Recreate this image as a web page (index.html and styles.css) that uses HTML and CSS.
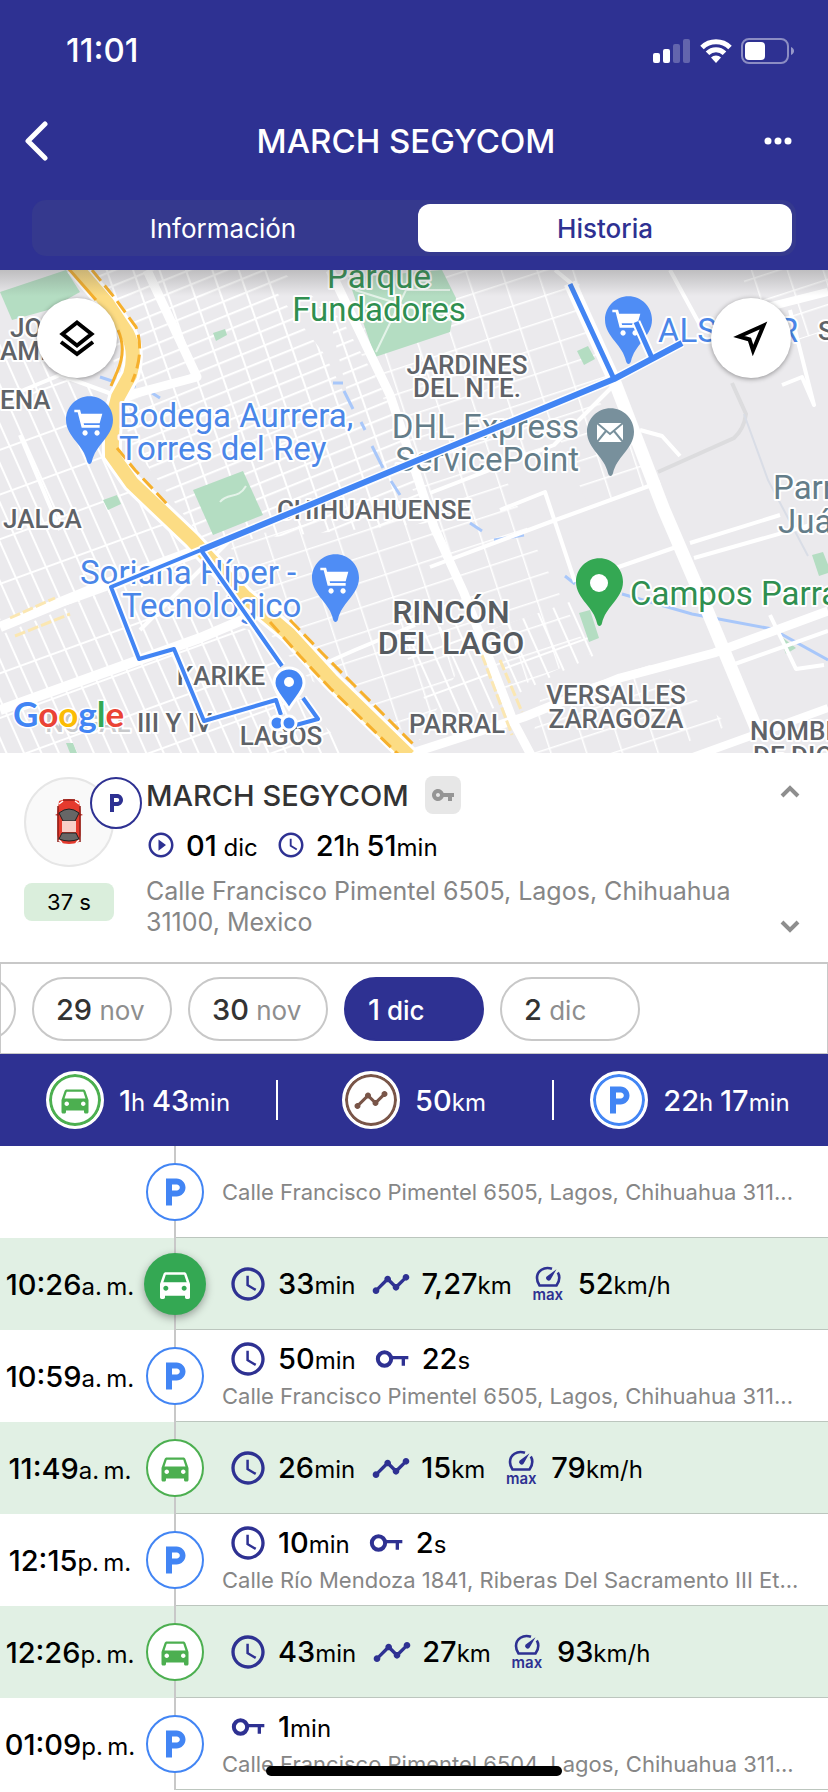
FILE: index.html
```html
<!DOCTYPE html>
<html lang="es">
<head>
<meta charset="utf-8">
<meta name="viewport" content="width=device-width, initial-scale=1">
<title>MARCH SEGYCOM</title>
<link rel="stylesheet" href="styles.css">
</head>
<body>
<svg class="defs" aria-hidden="true">
  <symbol id="car" viewBox="0 0 24 24"><path d="M18.92 6.01C18.72 5.42 18.16 5 17.5 5h-11c-.66 0-1.21.42-1.42 1.01L3 12v8c0 .55.45 1 1 1h1c.55 0 1-.45 1-1v-1h12v1c0 .55.45 1 1 1h1c.55 0 1-.45 1-1v-8l-2.08-5.99zM6.5 16c-.83 0-1.5-.67-1.5-1.5S5.67 13 6.5 13s1.5.67 1.5 1.5S7.33 16 6.5 16zm11 0c-.83 0-1.500-.67-1.500-1.500s.67-1.500 1.500-1.500 1.500.67 1.500 1.500-.67 1.500-1.500 1.500zM5 11l1.500-4.500h11L19 11H5z"/></symbol>
  <symbol id="parking" viewBox="0 0 24 24"><path d="M13 3H6v18h4v-6h3c3.310 0 6-2.690 6-6s-2.690-6-6-6zm.2 8H10V7h3.200c1.100 0 2 .9 2 2s-.9 2-2 2z"/></symbol>
  <symbol id="clock" viewBox="0 0 24 24"><path d="M11.990 2C6.470 2 2 6.480 2 12s4.470 10 9.990 10C17.520 22 22 17.520 22 12S17.520 2 11.990 2zM12 20c-4.420 0-8-3.580-8-8s3.580-8 8-8 8 3.580 8 8-3.580 8-8 8zm.5-13H11v6l5.250 3.150.75-1.230-4.500-2.670z"/></symbol>
  <symbol id="play" viewBox="0 0 24 24"><path d="M10 16.500l6-4.500-6-4.500v9zM12 2C6.480 2 2 6.480 2 12s4.480 10 10 10 10-4.480 10-10S17.520 2 12 2zm0 18c-4.410 0-8-3.590-8-8s3.590-8 8-8 8 3.590 8 8-3.590 8-8 8z"/></symbol>
  <symbol id="track" viewBox="0 0 24 24"><path d="M23 8c0 1.100-.9 2-2 2-.18 0-.35-.02-.51-.07l-3.560 3.550c.05.16.07.34.07.52 0 1.100-.9 2-2 2s-2-.9-2-2c0-.18.02-.36.07-.52l-2.550-2.550c-.16.05-.34.07-.52.07s-.36-.02-.52-.07l-4.550 4.560c.05.16.07.33.07.51 0 1.100-.9 2-2 2s-2-.9-2-2 .9-2 2-2c.18 0 .35.02.51.07l4.560-4.550C8.020 9.360 8 9.180 8 9c0-1.100.9-2 2-2s2 .9 2 2c0 .18-.02.36-.07.52l2.550 2.550c.16-.05.34-.07.52-.07s.36.02.52.07l3.550-3.560C19.020 8.350 19 8.180 19 8c0-1.100.9-2 2-2s2 .9 2 2z"/></symbol>
  <symbol id="ignition" viewBox="0 0 24 24"><g fill="none" stroke="currentColor"><circle cx="7.500" cy="12" r="4" stroke-width="2.400"/><path d="M11.500 11.200h10.300M18.800 11v5" stroke-width="2"/></g></symbol>
  <symbol id="key" viewBox="0 0 24 24"><path d="M12.650 10C11.830 7.670 9.610 6 7 6c-3.310 0-6 2.690-6 6s2.690 6 6 6c2.610 0 4.830-1.670 5.650-4H17v4h4v-4h2v-4H12.650zM7 14c-1.100 0-2-.9-2-2s.9-2 2-2 2 .9 2 2-.9 2-2 2z"/></symbol>
  <symbol id="gauge" viewBox="0 0 28 22"><path d="M18 2.800C10 0 3 5 3 12c0 2.800.7 5 2.500 7.500h17c1.800-2.500 2.800-5 2.800-7.800 0-1.900-.5-3.600-1.500-5.200" fill="none" stroke="currentColor" stroke-width="2.600" stroke-linejoin="round"/><path d="M22.500 3.200l-6 10.600a2.600 2.600 0 0 1-4.100-3.100z"/></symbol>
  <symbol id="cart" viewBox="0 0 24 24"><path d="M1 2v2h2.500l3 11.500H20v-2H8.300l-.3-1.300h12L22 5H6.100L5.300 2zM9 17.500a2 2 0 1 0 .1 0zM18 17.500a2 2 0 1 0 .1 0z"/></symbol>
  <symbol id="pin" viewBox="0 0 48 70"><path d="M24 0C11 0 0 10.500 0 24c0 9 5 15.500 10 22 5.500 7 9.500 12 11.500 20.500.8 3.500 4.200 3.500 5 0C28.500 58 32.500 53 38 46c5-6.500 10-13 10-22C48 10.500 37 0 24 0z"/></symbol>
</svg>

<header class="header">
  <div class="status">
    <span class="status-time">11:01</span>
    <svg class="status-icons" viewBox="0 0 144 28" role="img" aria-label="Señal, wifi y batería">
      <g fill="#fff"><rect x="1" y="17" width="7" height="10" rx="2"/><rect x="11" y="13" width="7" height="14" rx="2"/></g>
      <g fill="#fff" opacity=".25"><rect x="21" y="8" width="7" height="19" rx="2"/><rect x="31" y="3" width="7" height="24" rx="2"/></g>
      <g fill="none" stroke="#fff" stroke-width="5"><path d="M50 11.500a20 20 0 0 1 28 0"/><path d="M55.500 17.300a12 12 0 0 1 17 0"/></g>
      <path d="M59 21.500a7 7 0 0 1 10 0l-5 5.500z" fill="#fff"/>
      <rect x="90" y="3" width="46" height="24" rx="7" fill="none" stroke="#fff" stroke-opacity=".45" stroke-width="2"/>
      <rect x="93" y="6" width="20" height="18" rx="4" fill="#fff"/>
      <path d="M139 11c4 1.500 4 6.500 0 8z" fill="#fff" opacity=".5"/>
    </svg>
  </div>
  <div class="titlebar">
    <button class="icon-button back" aria-label="Atrás"><svg viewBox="0 0 24 40"><path d="M21 3L4 20l17 17" fill="none" stroke="#fff" stroke-width="5" stroke-linecap="round" stroke-linejoin="round"/></svg></button>
    <h1 class="title">MARCH SEGYCOM</h1>
    <button class="icon-button more" aria-label="Más"><svg viewBox="0 0 28 8"><circle cx="4" cy="4" r="3.500"/><circle cx="14" cy="4" r="3.500"/><circle cx="24" cy="4" r="3.500"/></svg></button>
  </div>
  <nav class="segments">
    <button class="segment">Información</button>
    <button class="segment active">Historia</button>
  </nav>
</header>

<section class="map" aria-label="Mapa">
  <svg class="map-canvas" viewBox="0 0 828 483" preserveAspectRatio="xMidYMid slice">
    <defs>
      <pattern id="blocksWide" width="25" height="14" patternUnits="userSpaceOnUse" patternTransform="rotate(-22) skewX(-3)"><path d="M0 0h25M0 0v14" fill="none" stroke="#fff" stroke-width="4"/></pattern>
      <pattern id="blocksTall" width="16" height="42" patternUnits="userSpaceOnUse" patternTransform="rotate(-20) skewX(4)"><path d="M0 0h16M0 0v42" fill="none" stroke="#fff" stroke-width="4"/></pattern>
      <pattern id="blocksOpen" width="34" height="24" patternUnits="userSpaceOnUse" patternTransform="rotate(-18)"><path d="M0 0h34M0 0v24" fill="none" stroke="#fff" stroke-width="3"/></pattern>
      <linearGradient id="topShade" x1="0" y1="0" x2="0" y2="1"><stop offset="0" stop-color="#555" stop-opacity=".3"/><stop offset="1" stop-color="#555" stop-opacity="0"/></linearGradient>
    </defs>
    <rect width="828" height="483" fill="#ebeaed"/>
    <path d="M95 0h185l62 50 48 83 40 120-225 20-75-100-10-50z" fill="url(#blocksWide)"/>
    <path d="M0 70l110 55 10 80 90 85-75 30L0 350z" fill="url(#blocksTall)"/>
    <path d="M0 365l110-45 140 40 60 80 40 43H0z" fill="url(#blocksTall)"/>
    <path d="M230 270l190-40 60 130-60 110-110-60-70-80z" fill="url(#blocksOpen)"/>
    <path d="M400 0h175l35 110-195 82-60-120z" fill="url(#blocksOpen)"/>
    <path d="M400 190l190-70 70 90-130 55 60 120-90 40z" fill="url(#blocksOpen)"/>
    <path d="M490 360l85-30 20 55-80 40zM400 370l75-25 30 90-70 20z" fill="url(#blocksTall)"/>
    <path d="M540 430l110-35 80 60-70 28H530z" fill="url(#blocksOpen)"/>
    <path d="M740 0h88v60l-60 20z" fill="url(#blocksOpen)"/>
    <path d="M275 20l20-10 35 40 20 85-25-50zM500 195l60-25 30 70-60 25zM660 120l70-10 10 60-60 30z" fill="#ebeaed"/>
    <g fill="#b4ddc2">
      <path d="M0 22L66 0l14 22-32 18-36 10z"/><path d="M348 8l94-8 14 28-6 34-75 25z"/><path d="M193 220l50-19 20 44-50 20z"/><path d="M213 63l12-4 2 6-11 6z"/><path d="M577 81l11-5 7 13-11 6zM103 230l14-5 4 9-13 6z"/>
      <path d="M579 343l11-3 9 28-10 4zM812 285l11-3 8 20-12 4zM778 364l18 14-10 6z"/><path d="M66 473h7l4 10h-7z"/>
    </g>
    <g fill="none" stroke="#e4f3e9" stroke-width="2"><path d="M355 20l95 30M376 82l30-62 44 0M220 232c8-10 18-2 26-16"/></g>
    <g fill="none" stroke="#a8c7fa" stroke-width="3"><path d="M470 253l12 8M494 270l30-5M565 306l10 8M622 324l70 20 80 15 56 31M333 113l10 0M344 121l9 18M361 152l4 8M372 176l11 22M391 211l9 14M100 107l12 4M128 116h8M152 123l8 5"/></g>
    <path d="M732 113l14 31q-2 15-12 24l-76 34" fill="none" stroke="#dcdcde" stroke-width="4"/>
    <path d="M744 144l24 66 40 76" fill="none" stroke="#d9dde6" stroke-width="2"/>
    <g fill="none" stroke="#fff" stroke-linejoin="round">
      <path d="M147 0l50 107L118 128M330 0l60 125 44 132 30 66 50 130 18 34" stroke-width="9"/>
      <path d="M570 13l44 97 50 130 43 100 50 120" stroke-width="13"/>
      <path d="M0 357l110-45 92-34M0 440l200-72 80-34" stroke-width="10"/>
      <path d="M400 487l124-40 96-39 94-25 114-42" stroke-width="9"/>
      <path d="M690 488l138-50M764 38l64-16" stroke-width="8"/>
      <path d="M614 115l-60 60-124 48M660 212l-110 40-120 45M690 273l90-28M694 288l134-38M604 302l78-27M670 0l30 55M790 40l24 95-12-28-20 8M555 0l16 13M640 160l22 6 18 20M732 395l96-34M770 345l26 54 28-4M0 130l60-25 60 22M20 165l40 95M230 270l-90 90M310 400l45-20 60-25M500 240l45-18 30 90" stroke-width="4"/>
    </g>
    <g fill="none" stroke="#fbe7b2" stroke-width="3" stroke-dasharray="11 3"><path d="M10 348l45-20M15 366l55-22M482 385l30 80M500 390l22 52"/></g>
    <path d="M75-4l32 37 20 30q10 19 3 42l-12 22q-7 22-6 58l20 28 60 57 52 56 45 38 42 46 78 76" fill="none" stroke="#fff" stroke-width="20"/>
    <path d="M75-4l32 37 20 30q10 19 3 42l-12 22q-7 22-6 58l20 28 60 57 52 56 45 38 42 46 78 76" fill="none" stroke="#fcdc84" stroke-width="14"/>
    <g fill="none" stroke="#f6b02c" stroke-width="3"><path d="M68-2l28 32M118 60q9 20-1 42l-6 14"/><path d="M92 0l22 27 22 30q9 25-4 55M117 178l18 22 32 34M270 352l30 34 30 32 70 68M290 350l35 36 90 90" stroke-dasharray="14 6"/></g>

    <g class="place place-blue">
      <use href="#pin" x="66" y="126" width="47" height="69"/><use href="#pin" x="605" y="26" width="47" height="69"/><use href="#pin" x="312" y="284" width="47" height="69"/>
    </g>
    <g fill="#fff"><use href="#cart" x="73" y="137" width="32" height="32"/><use href="#cart" x="611" y="37" width="32" height="32"/><use href="#cart" x="319" y="295" width="32" height="32"/></g>
    <use href="#pin" x="587" y="138" width="47" height="69" fill="#78909c"/>
    <g fill="#fff" stroke="#78909c" stroke-width="2"><rect x="596" y="152" width="28" height="21"/><path d="M597 153l13 11 13-11M597 172l9-11M623 172l-9-11" fill="none"/></g>
    <use href="#pin" x="576" y="288" width="47" height="69" fill="#34a853"/><circle cx="599" cy="313" r="9" fill="#fff"/>

    <g class="label label-blue"><text x="119" y="157">Bodega Aurrera,</text><text x="119" y="190">Torres del Rey</text><text x="658" y="72">ALSUPER</text><text x="80" y="314">Soriana Híper -</text><text x="122" y="347">Tecnológico</text></g>
    <g class="label label-green"><text class="middle" x="379" y="18">Parque</text><text class="middle" x="379" y="51">Fundadores</text><text x="630" y="335">Campos Parral</text></g>
    <g class="label label-slate"><text class="end" x="579" y="168">DHL Express</text><text class="end" x="579" y="201">ServicePoint</text><text x="773" y="229">Parral</text><text x="778" y="263">Juárez</text></g>
    <g class="label label-area">
      <text x="10" y="67">JO</text><text x="0" y="90">AMI</text><text x="0" y="139">ENA</text><text x="3" y="258">JALCA</text>
      <text class="middle" x="467" y="104">JARDINES</text><text class="middle" x="467" y="127">DEL NTE.</text>
      <text class="middle" x="374" y="249">CHIHUAHUENSE</text><text class="middle" x="221" y="415">KARIKE</text><text class="middle" x="281" y="475">LAGOS</text>
      <text class="end" x="212" y="462"><tspan fill-opacity=".35">NOGAL</tspan> III Y IV</text><text class="middle" x="457" y="463">PARRAL</text>
      <text class="middle" x="616" y="434">VERSALLES</text><text class="middle" x="616" y="458">ZARAGOZA</text><text x="750" y="470">NOMBRE</text><text x="753" y="495">DE DIOS</text><text x="818" y="70">S</text>
    </g>
    <g class="label label-town"><text class="middle" x="451" y="353">RINCÓN</text><text class="middle" x="451" y="384">DEL LAGO</text></g>

    <g fill="none" stroke-linejoin="round">
      <g stroke="#fff"><path d="M201 280l413-171 68-36M570 14l44 95M636 52l16 36" stroke-width="9"/><path d="M282 396l-81-116-90 37 28 72 35-10 30 72 72-21 5 15M303 428l15 21-22 6" stroke-width="8"/></g>
      <g stroke="#4285f4"><path d="M201 280l413-171 68-36" stroke-width="6"/><path d="M570 14l44 95M636 52l16 36" stroke-width="5"/><path d="M282 396l-81-116-90 37 28 72 35-10 30 72 72-21 5 15M303 428l15 21-22 6" stroke-width="4"/></g>
    </g>
    <g fill="#4285f4" stroke="#fff" stroke-width="3"><circle cx="277" cy="453" r="7"/><circle cx="289" cy="453" r="7"/><path d="M289 398c-8 0-15 6-15 15 0 8 7 13 15 26 8-13 15-18 15-26 0-9-7-15-15-15z"/></g>
    <circle cx="289" cy="412" r="5" fill="#fff"/>
    <text class="google" x="13" y="457"><tspan fill="#4285f4">G</tspan><tspan fill="#ea4335">o</tspan><tspan fill="#fbbc05">o</tspan><tspan fill="#4285f4">g</tspan><tspan fill="#34a853">l</tspan><tspan fill="#ea4335">e</tspan></text>
    <rect width="828" height="26" fill="url(#topShade)"/>
  </svg>
  <button class="map-button layers" aria-label="Capas"><svg viewBox="0 0 40 40"><path d="M20 4.500L34.500 16 20 27.500 5.500 16z"/><path d="M4 24l16 12 16-12"/></svg></button>
  <button class="map-button locate" aria-label="Ubicar"><svg viewBox="0 0 40 40"><path d="M32.500 7.500L8 18.500l10.500 3 3.500 11z"/></svg></button>
</section>

<section class="vehicle">
  <div class="vehicle-side">
    <div class="avatar">
      <svg class="avatar-car" viewBox="0 0 28 48"><path d="M4 3q10-4 20 0l1.500 10v24L24 44q-10 4-20 0l-1.500-7V13z" fill="#e53a2d"/><path d="M0 17l4-2v3zM28 17l-4-2v3z" fill="#b3261e"/><path d="M8 2h12M3 8v36M25 8v36" stroke="#8d1c16" stroke-width="1.500"/><path d="M4 15q10-8 20 0l-4 8H8z" fill="#666" stroke="#222"/><path d="M7 23h14v11H7z" fill="#f8cfc8"/><path d="M7 35h14l3 6q-10 4-20 0z" fill="#666" stroke="#222"/><path d="M4 6l4-3M24 6l-4-3M4 42l3 3M24 42l-3 3" stroke="#fff" stroke-width="1.500"/></svg>
      <span class="avatar-badge"><svg viewBox="0 0 24 24"><use href="#parking"/></svg></span>
    </div>
    <span class="age">37 s</span>
  </div>
  <div class="vehicle-main">
    <div class="vehicle-name"><h2>MARCH SEGYCOM</h2><span class="key-badge"><svg viewBox="0 0 24 24"><use href="#key"/></svg></span></div>
    <div class="vehicle-stats">
      <svg class="small-icon" viewBox="0 0 24 24"><use href="#play"/></svg><span class="value">01<small> dic</small></span>
      <svg class="small-icon" viewBox="0 0 24 24"><use href="#clock"/></svg><span class="value">21<small>h </small>51<small>min</small></span>
    </div>
    <p class="vehicle-address">Calle Francisco Pimentel 6505, Lagos, Chihuahua 31100, Mexico</p>
  </div>
  <div class="vehicle-nav">
    <button class="icon-button" aria-label="Anterior"><svg viewBox="0 0 20 14"><path d="M2 12l8-8 8 8" fill="none" stroke="#8e8e8e" stroke-width="4"/></svg></button>
    <button class="icon-button" aria-label="Siguiente"><svg viewBox="0 0 20 14"><path d="M2 2l8 8 8-8" fill="none" stroke="#8e8e8e" stroke-width="4"/></svg></button>
  </div>
</section>

<nav class="dates" aria-label="Fechas">
  <button class="date" aria-label="28 nov"></button>
  <button class="date"><b>29</b> nov</button>
  <button class="date"><b>30</b> nov</button>
  <button class="date current"><b>1</b> dic</button>
  <button class="date"><b>2</b> dic</button>
</nav>

<section class="summary">
  <div class="total"><span class="ring green"><svg viewBox="0 0 24 24"><use href="#car"/></svg></span><span class="value">1<small>h </small>43<small>min</small></span></div>
  <div class="total"><span class="ring brown"><svg viewBox="0 0 24 24"><use href="#track"/></svg></span><span class="value">50<small>km</small></span></div>
  <div class="total"><span class="ring blue"><svg viewBox="0 0 24 24"><use href="#parking"/></svg></span><span class="value">22<small>h </small>17<small>min</small></span></div>
</section>

<ol class="timeline">
  <li class="event">
    <span class="time"></span>
    <span class="marker blue"><svg viewBox="0 0 24 24"><use href="#parking"/></svg></span>
    <div class="details"><p class="address">Calle Francisco Pimentel 6505, Lagos, Chihuahua 311...</p></div>
  </li>
  <li class="event trip">
    <span class="time value">10:26<small>a.&#8239;m.</small></span>
    <span class="marker selected"><svg viewBox="0 0 24 24"><use href="#car"/></svg></span>
    <div class="details"><div class="metrics">
      <span class="metric"><svg viewBox="0 0 24 24"><use href="#clock"/></svg><span class="value">33<small>min</small></span></span>
      <span class="metric"><svg viewBox="0 0 24 24"><use href="#track"/></svg><span class="value">7,27<small>km</small></span></span>
      <span class="metric"><span class="max"><svg viewBox="0 0 28 22"><use href="#gauge"/></svg>max</span><span class="value">52<small>km/h</small></span></span>
    </div></div>
  </li>
  <li class="event">
    <span class="time value">10:59<small>a.&#8239;m.</small></span>
    <span class="marker blue"><svg viewBox="0 0 24 24"><use href="#parking"/></svg></span>
    <div class="details"><div class="metrics">
      <span class="metric"><svg viewBox="0 0 24 24"><use href="#clock"/></svg><span class="value">50<small>min</small></span></span>
      <span class="metric"><svg viewBox="0 0 24 24"><use href="#ignition"/></svg><span class="value">22<small>s</small></span></span>
    </div><p class="address">Calle Francisco Pimentel 6505, Lagos, Chihuahua 311...</p></div>
  </li>
  <li class="event trip">
    <span class="time value">11:49<small>a.&#8239;m.</small></span>
    <span class="marker green"><svg viewBox="0 0 24 24"><use href="#car"/></svg></span>
    <div class="details"><div class="metrics">
      <span class="metric"><svg viewBox="0 0 24 24"><use href="#clock"/></svg><span class="value">26<small>min</small></span></span>
      <span class="metric"><svg viewBox="0 0 24 24"><use href="#track"/></svg><span class="value">15<small>km</small></span></span>
      <span class="metric"><span class="max"><svg viewBox="0 0 28 22"><use href="#gauge"/></svg>max</span><span class="value">79<small>km/h</small></span></span>
    </div></div>
  </li>
  <li class="event">
    <span class="time value">12:15<small>p.&#8239;m.</small></span>
    <span class="marker blue"><svg viewBox="0 0 24 24"><use href="#parking"/></svg></span>
    <div class="details"><div class="metrics">
      <span class="metric"><svg viewBox="0 0 24 24"><use href="#clock"/></svg><span class="value">10<small>min</small></span></span>
      <span class="metric"><svg viewBox="0 0 24 24"><use href="#ignition"/></svg><span class="value">2<small>s</small></span></span>
    </div><p class="address">Calle Río Mendoza 1841, Riberas Del Sacramento III Et...</p></div>
  </li>
  <li class="event trip">
    <span class="time value">12:26<small>p.&#8239;m.</small></span>
    <span class="marker green"><svg viewBox="0 0 24 24"><use href="#car"/></svg></span>
    <div class="details"><div class="metrics">
      <span class="metric"><svg viewBox="0 0 24 24"><use href="#clock"/></svg><span class="value">43<small>min</small></span></span>
      <span class="metric"><svg viewBox="0 0 24 24"><use href="#track"/></svg><span class="value">27<small>km</small></span></span>
      <span class="metric"><span class="max"><svg viewBox="0 0 28 22"><use href="#gauge"/></svg>max</span><span class="value">93<small>km/h</small></span></span>
    </div></div>
  </li>
  <li class="event">
    <span class="time value">01:09<small>p.&#8239;m.</small></span>
    <span class="marker blue"><svg viewBox="0 0 24 24"><use href="#parking"/></svg></span>
    <div class="details"><div class="metrics">
      <span class="metric"><svg viewBox="0 0 24 24"><use href="#ignition"/></svg><span class="value">1<small>min</small></span></span>
    </div><p class="address">Calle Francisco Pimentel 6504, Lagos, Chihuahua 311...</p></div>
  </li>
</ol>
<div class="home-indicator"></div>
</body>
</html>
```
FILE: styles.css
```css
:root {
  --navy: #2e3192;
  --blue: #4285f4;
  --green: #4caf50;
  --line: #c8c8c8;
}
* { box-sizing: border-box; }
body {
  margin: 0;
  background: #fff;
  color: #000;
  font-family: Inter, "Liberation Sans", sans-serif;
  overflow-x: hidden;
}
button {
  margin: 0;
  padding: 0;
  border: 0;
  background: none;
  font: inherit;
  color: inherit;
}
h1, h2, p, ol { margin: 0; padding: 0; font-weight: 500; }
svg { display: block; fill: currentColor; }
.defs { display: none; }

.header { background: var(--navy); color: #fff; padding-bottom: 14px; }
.status {
  display: flex;
  justify-content: space-between;
  align-items: center;
  height: 100px;
  padding: 0 32px 0 66px;
}
.status-time { font-size: 33px; font-weight: 500; }
.status-icons { width: 144px; height: 28px; }
.titlebar {
  display: flex;
  justify-content: space-between;
  align-items: center;
  height: 82px;
  padding: 0 36px 0 24px;
}
.title { font-size: 33px; text-align: center; }
.icon-button { display: grid; place-items: center; }
.back svg { width: 24px; height: 40px; }
.more { height: 40px; }
.more svg { width: 28px; height: 8px; }
.segments {
  display: flex;
  gap: 8px;
  margin: 18px 32px 0;
  padding: 4px;
  border-radius: 14px;
  background: #35398e;
}
.segment { flex: 1; height: 48px; border-radius: 12px; font-size: 26px; }
.segment.active { background: #fff; color: var(--navy); font-weight: 500; }

.map { position: relative; overflow: hidden; }
.map-canvas { width: 100%; height: 483px; }
.map-button {
  position: absolute;
  top: 28px;
  display: grid;
  place-items: center;
  width: 80px;
  height: 80px;
  border-radius: 50%;
  background: #fff;
  box-shadow: 0 1px 5px rgba(0, 0, 0, .4);
}
.map-button svg {
  width: 40px;
  height: 40px;
  fill: none;
  stroke: #000;
  stroke-width: 4px;
}
.layers { left: 37px; }
.locate { right: 37px; }
.place-blue { fill: #4f8df5; }
.label {
  font-family: Roboto, sans-serif;
  font-size: 33px;
  stroke: #fff;
  stroke-width: 4px;
  stroke-linejoin: round;
  paint-order: stroke;
}
.label-blue { fill: #4a86e8; }
.label-green { fill: #2f8f50; }
.label-slate { fill: #647d89; }
.label-area { fill: #5f6368; font-size: 26px; font-weight: 500; }
.label-town { fill: #565b60; font-size: 32px; font-weight: 500; }
.middle { text-anchor: middle; }
.end { text-anchor: end; }
.google {
  font-family: Lato, sans-serif;
  font-size: 35px;
  font-weight: 700;
  stroke: #fff;
  stroke-width: 3px;
  paint-order: stroke;
}

.value { font-size: 29px; font-weight: 500; white-space: nowrap; }
.value small { font-size: 24px; font-weight: 400; }

.vehicle {
  display: grid;
  grid-template-columns: 90px 1fr 28px;
  column-gap: 32px;
  padding: 23px 24px 24px;
}
.avatar {
  position: relative;
  display: grid;
  place-items: center;
  width: 90px;
  height: 90px;
  margin: 1px 0 16px;
  border: 2px solid #e6e6e6;
  border-radius: 50%;
  background: #f9f9f9;
}
.avatar-car { width: 28px; height: 48px; }
.avatar-badge {
  position: absolute;
  top: -2px;
  left: 64px;
  display: grid;
  place-items: center;
  width: 52px;
  height: 52px;
  border: 2px solid var(--navy);
  border-radius: 50%;
  background: #fff;
  color: var(--navy);
}
.avatar-badge svg { width: 24px; height: 24px; }
.age {
  display: block;
  border-radius: 8px;
  background: #daeedc;
  font-size: 22px;
  line-height: 38px;
  text-align: center;
}
.vehicle-name { display: flex; align-items: center; gap: 16px; height: 38px; color: #333; }
.vehicle-name h2 { font-size: 29px; font-weight: 600; white-space: nowrap; }
.key-badge {
  display: grid;
  place-items: center;
  width: 36px;
  height: 38px;
  border-radius: 8px;
  background: #e7e7e7;
  color: #959595;
}
.vehicle-name h2 { font-weight: 500; }
.key-badge svg { width: 24px; height: 24px; }
.vehicle-stats { display: flex; align-items: center; height: 62px; }
.small-icon { width: 30px; height: 30px; color: var(--navy); }
.vehicle-stats .value { margin: 0 18px 0 10px; }
.vehicle-address { color: #868686; font-size: 25px; font-weight: 400; line-height: 31px; }
.vehicle-nav {
  display: flex;
  flex-direction: column;
  justify-content: space-between;
  padding: 8px 0 4px;
}
.vehicle-nav svg { width: 20px; height: 14px; }

.dates {
  display: flex;
  gap: 16px;
  height: 92px;
  padding-top: 13px;
  border: 1px solid var(--line);
  border-top-width: 2px;
  overflow: hidden;
}
.date {
  flex: none;
  width: 140px;
  height: 64px;
  padding-left: 22px;
  border: 2px solid var(--line);
  border-radius: 32px;
  color: #8e8e8e;
  font-size: 26px;
  text-align: left;
}
.date:first-child { margin-left: -125px; }
.date b { color: #333; font-size: 29px; font-weight: 500; }
.date.current { border-color: var(--navy); background: var(--navy); font-weight: 500; }
.date.current, .date.current b { color: #fff; }

.summary {
  display: grid;
  grid-template-columns: repeat(3, 1fr);
  height: 92px;
  background: var(--navy);
  color: #fff;
}
.total { position: relative; display: flex; align-items: center; justify-content: center; gap: 15px; }
.total + .total::before {
  content: "";
  position: absolute;
  left: 0;
  width: 2px;
  height: 40px;
  background: #fff;
}
.ring {
  display: grid;
  place-items: center;
  width: 58px;
  height: 58px;
  border: 3px solid #fff;
  border-radius: 50%;
  background: #fff;
  box-shadow: inset 0 0 0 3px currentColor;
}
.ring svg, .marker svg { width: 36px; height: 36px; }
.green { color: var(--green); }
.blue { color: var(--blue); }
.brown { color: #795548; }

.timeline { list-style: none; }
.event {
  display: grid;
  grid-template-columns: 140px 70px 1fr;
  align-items: center;
  height: 92px;
  background: linear-gradient(var(--line), var(--line)) 174px 0 / 2px 100% no-repeat;
}
.event.trip { background-color: #e1f0e4; }
.time { text-align: center; }
.marker {
  display: grid;
  place-items: center;
  justify-self: center;
  width: 58px;
  height: 58px;
  border: 2px solid currentColor;
  border-radius: 50%;
  background: #fff;
}
.marker.selected {
  width: 62px;
  height: 62px;
  border: 0;
  background: #34a853;
  color: #fff;
  box-shadow: 0 3px 8px rgba(0, 0, 0, .35);
}
.marker.selected svg { width: 40px; height: 40px; }
.details {
  display: flex;
  flex-direction: column;
  justify-content: center;
  height: 92px;
  min-width: 0;
  margin-left: -34px;
  padding-left: 46px;
  border-bottom: 1px solid #bcc6be;
}
.metrics { display: flex; gap: 16px; padding-left: 6px; }
.metric { display: flex; align-items: center; gap: 10px; height: 40px; }
.metric svg { width: 40px; height: 40px; color: var(--navy); }
.max {
  width: 40px;
  color: var(--navy);
  font-size: 15px;
  font-weight: 600;
  line-height: 14px;
  text-align: center;
}
.metric .max svg { width: 28px; height: 22px; margin: 0 auto; }
.address {
  overflow: hidden;
  color: #868686;
  font-size: 22px;
  font-weight: 400;
  line-height: 34px;
  white-space: nowrap;
}
.home-indicator {
  position: fixed;
  bottom: 16px;
  left: 50%;
  width: 296px;
  height: 10px;
  margin-left: -148px;
  border-radius: 5px;
  background: #000;
}
```
